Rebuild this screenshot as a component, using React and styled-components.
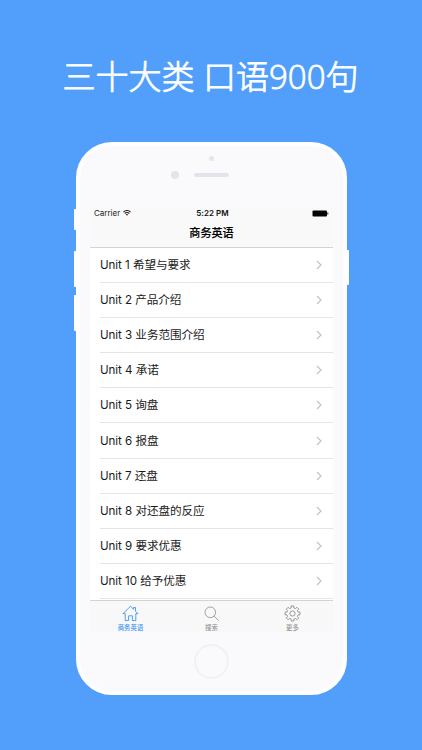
import styled, { createGlobalStyle } from 'styled-components';

const GlobalStyle = createGlobalStyle`
  * {
    box-sizing: border-box;
  }

  body {
    margin: 0;
    background: #519ffb;
    font-family: Inter, 'Noto Sans CJK SC', sans-serif;
  }
`;

const Page = styled.div`
  width: 422px;
  height: 750px;
  overflow: hidden;
  display: flex;
  flex-direction: column;
  align-items: center;
  background: #519ffb;
`;

const Headline = styled.h1`
  margin: 0;
  height: 142px;
  padding: 53px 1px 0 0;
  font-family: 'Open Sans', 'Noto Sans CJK SC', sans-serif;
  font-size: 33px;
  font-weight: 300;
  line-height: 48px;
  color: #fff;
  -webkit-text-stroke: 0.8px #fff; /* Light와 Regular 사이 굵기 */
  white-space: nowrap;
`;

const Phone = styled.main`
  position: relative;
  width: 271px;
  height: 553px;
  margin-left: 1px;
  border: 4px solid #fff;
  border-radius: 36px;
  background: #fafafc;
  display: flex;
  flex-direction: column;
  align-items: center;
`;

/* 기기 옆면 버튼 */
const SideButton = styled.i`
  position: absolute;
  ${({ $side }) => $side}: -6px;
  top: ${({ $top }) => $top}px;
  width: 3px;
  height: ${({ $height }) => $height}px;
  border-radius: 1px;
  background: #fff;
`;

const PhoneTop = styled.div`
  width: 100%;
  height: 60px;
  padding-top: 10px;
  display: flex;
  flex-direction: column;
  align-items: center;
`;

const Sensor = styled.div`
  width: 5px;
  height: 5px;
  border-radius: 50%;
  background: #e5e5ec;
`;

const SpeakerRow = styled.div`
  display: flex;
  align-items: center;
  gap: 15px;
  margin-top: 10px;
  padding-right: 23px;
`;

const Camera = styled.div`
  width: 8px;
  height: 8px;
  border-radius: 50%;
  background: #e3e4eb;
`;

const Speaker = styled.div`
  width: 35px;
  height: 4px;
  border-radius: 2px;
  background: #e3e4eb;
`;

const Screen = styled.section`
  width: 243px;
  height: 426px;
  display: flex;
  flex-direction: column;
  background: #fff;
  overflow: hidden;
`;

const StatusBar = styled.div`
  height: 14px;
  flex: none;
  padding: 0 4px;
  display: grid;
  grid-template-columns: 1fr auto 1fr;
  align-items: center;
  background: #f9f9fa;
  font-size: 8px;
  line-height: 14px;
  color: #222;
`;

const Carrier = styled.span`
  display: flex;
  align-items: center;
  gap: 3px;
`;

const Time = styled.span`
  padding-left: 2px;
  font-weight: 600;
  letter-spacing: 0.05px;
  color: #111;
`;

const BatteryIcon = styled.svg`
  justify-self: end;
`;

const NavBar = styled.header`
  height: 28px;
  flex: none;
  border-bottom: 1px solid #d4d4d6;
  background: #f9f9f9;
  font-size: 11.1px;
  font-weight: 500;
  line-height: 27px;
  text-align: center;
  color: #000;
  -webkit-text-stroke: 0.15px #000;
`;

const List = styled.ul`
  height: 352px;
  flex: none;
  margin: 0;
  padding: 0 0 0 10px;
  list-style: none;
  overflow: hidden;
`;

const Row = styled.li`
  height: 35.1px;
  padding-right: 11px;
  border-bottom: 1px solid #e5e5e8;
  display: flex;
  align-items: center;
  justify-content: space-between;
  font-size: 11.6px;
  letter-spacing: -0.06px;
  line-height: 20px;
  white-space: nowrap;
  color: #1a1a1a;
`;

const TabBar = styled.nav`
  height: 32px;
  flex: none;
  display: grid;
  grid-template-columns: repeat(3, 81px);
  border-top: 1px solid #d3d3d6;
  background: #f8f8f8;
`;

const Tab = styled.div`
  padding-top: 4px;
  display: flex;
  flex-direction: column;
  align-items: center;
  gap: 2px;
  font-size: 6.4px;
  line-height: 9px;
  font-weight: 500;
  color: ${({ $active }) => ($active ? '#3d94f0' : '#969696')};
`;

const HomeButton = styled.div`
  width: 35px;
  height: 35px;
  margin-top: 12px;
  border: 2px solid #f1f1f5;
  border-radius: 50%;
`;

const units = [
  '希望与要求',
  '产品介绍',
  '业务范围介绍',
  '承诺',
  '询盘',
  '报盘',
  '还盘',
  '对还盘的反应',
  '要求优惠',
  '给予优惠',
];

// 톱니 8개짜리 설정 아이콘 외곽선
const gearPoints = Array.from({ length: 8 }, (_, i) => {
  const base = (i * Math.PI) / 4;
  return [[-0.25, 5.7], [-0.17, 7.6], [0.17, 7.6], [0.25, 5.7]]
    .map(([a, r]) => `${(8.5 + r * Math.sin(base + a)).toFixed(2)},${(8.5 - r * Math.cos(base + a)).toFixed(2)}`)
    .join(' ');
}).join(' ');

function WifiIcon() {
  return (
    <svg width="8" height="6" viewBox="0 0 8 6" fill="none" stroke="#222" strokeWidth="1.1">
      <path d="M.4 2.1Q4-1 7.6 2.1" />
      <path d="M1.7 3.5Q4 1.5 6.3 3.5" />
      <path d="M2.8 4.5Q4 3.5 5.2 4.5L4 5.8Z" fill="#222" stroke="none" />
    </svg>
  );
}

function Chevron() {
  return (
    <svg width="6" height="10" viewBox="0 0 6 10" fill="none" stroke="#c3c3c7" strokeWidth="1.2">
      <path d="M1 1L5 5L1 9" />
    </svg>
  );
}

function HomeIcon() {
  return (
    <svg width="17" height="17" viewBox="0 0 17 17" fill="none" stroke="#3d94f0" strokeWidth="0.9">
      <path d="M1 8.7L8.5 1.2L11.6 4.3V2.5H13.5V6.2L16 8.7H13.8V15.6H10.4V10.8H6.6V15.6H3.2V8.7Z" />
    </svg>
  );
}

function SearchIcon() {
  return (
    <svg width="17" height="17" viewBox="0 0 17 17" fill="none" stroke="#969696" strokeWidth="0.9">
      <circle cx="7.3" cy="7.3" r="5.3" />
      <path d="M11.1 11.1L15.5 15.5" />
    </svg>
  );
}

function GearIcon() {
  return (
    <svg width="17" height="17" viewBox="0 0 17 17" fill="none" stroke="#8d8d8d" strokeWidth="0.9" strokeLinejoin="round">
      <polygon points={gearPoints} />
      <circle cx="8.5" cy="8.5" r="2.6" />
    </svg>
  );
}

function App() {
  return (
    <Page>
      <GlobalStyle />
      <Headline>三十大类 口语900句</Headline>

      <Phone>
        <SideButton $side="left" $top={63} $height={21} />
        <SideButton $side="left" $top={105} $height={36} />
        <SideButton $side="left" $top={149} $height={36} />
        <SideButton $side="right" $top={104} $height={35} />

        <PhoneTop>
          <Sensor />
          <SpeakerRow>
            <Camera />
            <Speaker />
          </SpeakerRow>
        </PhoneTop>

        <Screen>
          <StatusBar>
            <Carrier>
              Carrier
              <WifiIcon />
            </Carrier>
            <Time>5:22 PM</Time>
            <BatteryIcon width="17" height="7" viewBox="0 0 17 7">
              <rect x="0.5" y="0.5" width="14.5" height="6" rx="1" fill="#050505" />
              <rect x="15.3" y="2.5" width="1" height="2" fill="#222" />
            </BatteryIcon>
          </StatusBar>
          <NavBar>商务英语</NavBar>

          <List>
            {units.map((name, idx) => (
              <Row key={name}>
                Unit {idx + 1} {name}
                <Chevron />
              </Row>
            ))}
          </List>

          <TabBar>
            <Tab $active>
              <HomeIcon />
              商务英语
            </Tab>
            <Tab>
              <SearchIcon />
              搜索
            </Tab>
            <Tab>
              <GearIcon />
              更多
            </Tab>
          </TabBar>
        </Screen>

        <HomeButton />
      </Phone>
    </Page>
  );
}

export default App;
